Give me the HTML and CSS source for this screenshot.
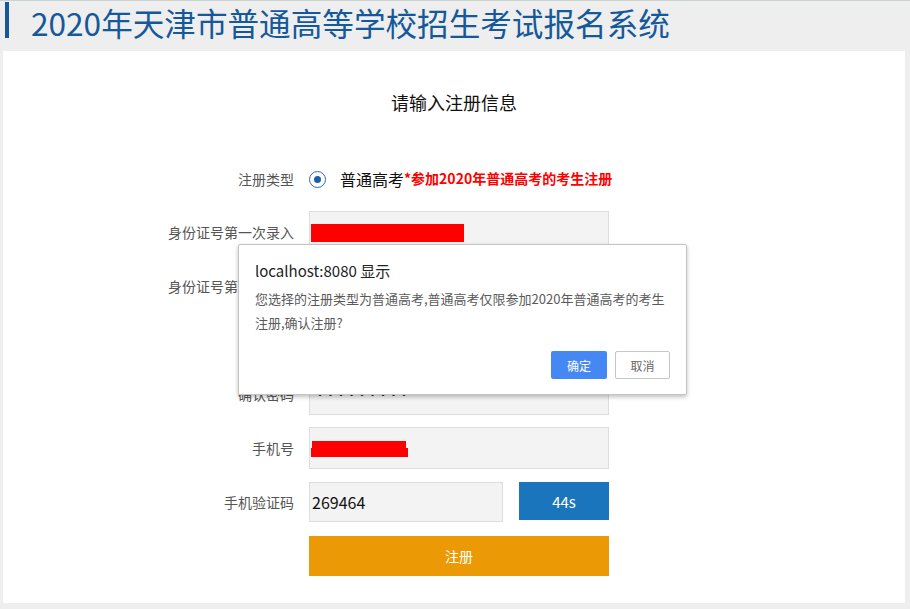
FILE: index.html
```html
<!DOCTYPE html>
<html lang="zh-CN">
<head>
<meta charset="utf-8">
<title>2020年天津市普通高等学校招生考试报名系统</title>
<link rel="stylesheet" href="styles.css">
</head>
<body>
<header class="header">
  <span class="header-bar"></span>
  <h1 class="title">2020年天津市普通高等学校招生考试报名系统</h1>
</header>
<main class="panel">
  <h2 class="heading">请输入注册信息</h2>
  <form class="form">
    <div class="row row-type">
      <label class="label">注册类型</label>
      <div class="type-field">
        <span class="radio"><span class="radio-dot"></span></span>
        <span class="type-name">普通高考</span><span class="type-note">*参加2020年普通高考的考生注册</span>
      </div>
    </div>
    <div class="row row-first">
      <label class="label">身份证号第一次录入</label>
      <div class="input"><span class="redact redact-id"></span></div>
    </div>
    <div class="row">
      <label class="label">身份证号第二次录入</label>
      <div class="input"></div>
    </div>
    <div class="row">
      <label class="label">设置密码</label>
      <div class="input"></div>
    </div>
    <div class="row">
      <label class="label">确认密码</label>
      <div class="input"><span class="dots">•••••••••</span></div>
    </div>
    <div class="row">
      <label class="label">手机号</label>
      <div class="input"><span class="redact-phone"><span class="redact redact-phone-a"></span><span class="redact redact-phone-b"></span></span></div>
    </div>
    <div class="row row-code">
      <label class="label">手机验证码</label>
      <div class="code-field">
        <div class="input input-code">269464</div>
        <button type="button" class="btn-count">44s</button>
      </div>
    </div>
    <div class="row row-submit">
      <span class="label"></span>
      <button type="button" class="btn-submit">注册</button>
    </div>
  </form>

  <div class="dialog">
    <div class="dialog-title">localhost:8080 显示</div>
    <div class="dialog-msg">您选择的注册类型为普通高考,普通高考仅限参加2020年普通高考的考生<br>注册,确认注册?</div>
    <div class="dialog-actions">
      <button type="button" class="dlg-btn dlg-ok">确定</button>
      <button type="button" class="dlg-btn dlg-cancel">取消</button>
    </div>
  </div>
</main>
</body>
</html>
```
FILE: styles.css
```css
* { box-sizing: border-box; }
html, body { margin: 0; padding: 0; }
body {
  background: #eeeeee;
  font-family: "Noto Sans CJK SC", "Noto Sans", sans-serif;
  width: 910px;
  height: 609px;
  overflow: hidden;
}
.header {
  height: 51px;
  display: flex;
  align-items: flex-start;
  border-top: 1px solid #c9d3cf;
}
.header-bar {
  width: 4px;
  height: 36px;
  margin: 1px 0 0 5px;
  background: #15579a;
}
.title {
  margin: 0 0 0 22px;
  font-size: 31.6px;
  font-weight: normal;
  line-height: 42px;
  color: #15599a;
  white-space: nowrap;
}
.panel {
  position: relative;
  margin: 0 5px 0 3px;
  height: 552px;
  background: #ffffff;
  padding-top: 39px;
}
.heading {
  margin: 0;
  text-align: center;
  font-size: 18px;
  font-weight: normal;
  line-height: 24px;
  color: #111;
}
.form {
  margin: 50px 0 0 131px;
  width: 475px;
}
.row {
  display: grid;
  grid-template-columns: 160px 300px;
  column-gap: 15px;
  align-items: center;
  margin-top: 12px;
}
.row-type { margin-top: 0; height: 30px; }
.row-first { margin-top: 17px; }
.row-code { margin-top: 13px; }
.row-submit { margin-top: 14px; }
.label {
  text-align: right;
  font-size: 14px;
  color: #555;
  white-space: nowrap;
}
.type-field {
  display: flex;
  align-items: center;
  height: 30px;
}
.radio {
  width: 17px;
  height: 17px;
  border: 1.5px solid #2b6cb0;
  border-radius: 50%;
  display: flex;
  align-items: center;
  justify-content: center;
  margin-right: 14px;
  flex: none;
}
.radio-dot {
  width: 7px;
  height: 7px;
  border-radius: 50%;
  background: #1b5fa8;
}
.type-name {
  font-size: 16px;
  color: #111;
  white-space: nowrap;
}
.type-note {
  font-size: 14px;
  font-weight: bold;
  color: #f00;
  white-space: nowrap;
  margin-top: -3px;
}
.input {
  height: 42px;
  border: 1px solid #dddddd;
  background: #f3f3f3;
  display: flex;
  align-items: center;
  padding-left: 1px;
  font-size: 16px;
  color: #111;
  position: relative;
}
.redact {
  display: block;
  background: #ff0000;
}
.redact-id { width: 153px; height: 18px; margin-top: 2px; }
.redact-phone { display: block; position: relative; width: 98px; height: 17px; margin-top: 2px; }
.redact-phone-a { position: absolute; left: 1px; top: 0; width: 94px; height: 10px; }
.redact-phone-b { position: absolute; left: 0; top: 7px; width: 97px; height: 9px; }
.dots {
  font-size: 12px;
  letter-spacing: -1.5px;
  color: #222;
  padding-left: 3px;
}
.code-field {
  display: flex;
  align-items: flex-start;
  justify-content: space-between;
}
.input-code {
  width: 194px;
  height: 40px;
  padding-left: 2px;
}
.btn-count {
  width: 90px;
  height: 38px;
  border: none;
  background: #1b75bc;
  color: #fff;
  font-family: inherit;
  font-size: 15px;
  padding: 0;
}
.btn-submit {
  height: 40px;
  border: none;
  background: #eb9a06;
  color: #fff;
  font-family: inherit;
  font-size: 14px;
  padding: 0;
}
.dialog {
  position: absolute;
  left: 235px;
  top: 193px;
  width: 449px;
  height: 151px;
  background: #fff;
  border: 1px solid #c4c4c4;
  border-radius: 2px;
  box-shadow: 0 2px 4px rgba(0,0,0,0.25);
  padding: 16px 16px 0 16px;
}
.dialog-title {
  font-size: 15px;
  line-height: 20px;
  color: #222;
}
.dialog-msg {
  margin-top: 6px;
  font-size: 13px;
  line-height: 24px;
  color: #5a5a5a;
  white-space: nowrap;
}
.dialog-actions {
  display: flex;
  justify-content: flex-end;
  gap: 8px;
  margin-top: 16px;
}
.dlg-btn {
  height: 28px;
  border-radius: 2px;
  font-family: inherit;
  font-size: 12px;
  padding: 0;
}
.dlg-ok {
  width: 56px;
  border: none;
  background: #4688f3;
  color: #fff;
}
.dlg-cancel {
  width: 55px;
  border: 1px solid #c6c6c6;
  background: #fff;
  color: #666;
}
```
